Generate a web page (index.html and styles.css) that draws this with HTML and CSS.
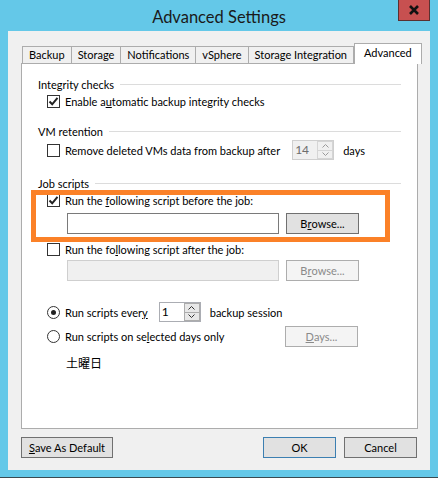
FILE: index.html
```html
<!DOCTYPE html>
<html lang="en">
<head>
  <meta charset="UTF-8" />
  <title>Advanced Settings</title>
  <link rel="stylesheet" href="styles.css">
</head>
<body>

  <div class="window">
    <div class="titlebar">
      <span class="title">Advanced Settings</span>
      <div class="close-btn">
        <svg width="12" height="10" viewBox="0 0 12 10">
          <path d="M2 1 L10 9 M10 1 L2 9" stroke="#111" stroke-width="2.6" />
        </svg>
      </div>
    </div>

    <div class="client">
      <div class="tabs">
        <div class="tab">Backup</div>
        <div class="tab">Storage</div>
        <div class="tab">Notifications</div>
        <div class="tab">vSphere</div>
        <div class="tab">Storage Integration</div>
        <div class="tab active">Advanced</div>
      </div>

      <div class="panel">
        <div class="group-head head-first"><span>Integrity checks</span><div class="rule"></div></div>
        <div class="row row-check1">
          <span class="check on"><svg width="11" height="11" viewBox="0 0 11 11"><path d="M1.5 5.5 L4.2 8.3 L9.5 1.8" fill="none" stroke="#222" stroke-width="2" /></svg></span>
          <span class="label">Enable a<u>u</u>tomatic backup integrity checks</span>
        </div>

        <div class="group-head head-vm"><span>VM retention</span><div class="rule"></div></div>
        <div class="row row-vm">
          <span class="check"></span>
          <span class="label">Remove deleted VMs data from backup after</span>
          <div class="spin spin-off spin-days">
            <span class="spin-val">14</span>
            <div class="spin-btns">
              <span class="arrow"><svg width="7" height="4" viewBox="0 0 7 4"><path d="M0.5 3.5 L3.5 0.5 L6.5 3.5" fill="none" stroke="#9a9a9a" /></svg></span>
              <span class="arrow"><svg width="7" height="4" viewBox="0 0 7 4"><path d="M0.5 0.5 L3.5 3.5 L6.5 0.5" fill="none" stroke="#9a9a9a" /></svg></span>
            </div>
          </div>
          <span class="label days">days</span>
        </div>

        <div class="group-head head-job"><span>Job scripts</span><div class="rule"></div></div>
        <div class="row row-before">
          <span class="check on"><svg width="11" height="11" viewBox="0 0 11 11"><path d="M1.5 5.5 L4.2 8.3 L9.5 1.8" fill="none" stroke="#222" stroke-width="2" /></svg></span>
          <span class="label">Run the <u>f</u>ollowing script before the job:</span>
        </div>
        <div class="row row-path1">
          <div class="textbox"></div>
          <div class="button">B<u>r</u>owse...</div>
        </div>
        <div class="row row-after">
          <span class="check"></span>
          <span class="label">Run the fo<u>l</u>lowing script after the job:</span>
        </div>
        <div class="row row-path2">
          <div class="textbox disabled"></div>
          <div class="button disabled">B<u>r</u>owse...</div>
        </div>

        <div class="row row-every">
          <span class="radio on"></span>
          <span class="label">Run scripts ever<u>y</u></span>
          <div class="spin spin-every">
            <span class="spin-val">1</span>
            <div class="spin-btns">
              <span class="arrow"><svg width="7" height="4" viewBox="0 0 7 4"><path d="M0.5 3.5 L3.5 0.5 L6.5 3.5" fill="none" stroke="#333" /></svg></span>
              <span class="arrow"><svg width="7" height="4" viewBox="0 0 7 4"><path d="M0.5 0.5 L3.5 3.5 L6.5 0.5" fill="none" stroke="#333" /></svg></span>
            </div>
          </div>
          <span class="label">backup session</span>
        </div>
        <div class="row row-days">
          <span class="radio"></span>
          <span class="label">Run scripts on se<u>l</u>ected days only</span>
          <div class="button disabled days-btn"><u>D</u>ays...</div>
        </div>
        <div class="row row-jp">
          <span class="label jp">土曜日</span>
        </div>

        <div class="highlight"></div>
      </div>

      <div class="footer">
        <div class="button footer-btn save-btn"><u>S</u>ave As Default</div>
        <div class="spacer"></div>
        <div class="button footer-btn default">OK</div>
        <div class="button footer-btn">Cancel</div>
      </div>
    </div>
  </div>

</body>
</html>
```

FILE: styles.css
```css
body {
  margin: 0;
  padding: 0;
  font-family: Lato, "Noto Sans CJK JP", sans-serif;
  font-size: 11px;
  color: #000;
}

.window {
  width: 438px;
  height: 478px;
  box-sizing: border-box;
  background: #64c8e8;
  border-bottom: 1px solid #3a4a50;
  display: flex;
  flex-direction: column;
}

.titlebar {
  position: relative;
  height: 31px;
  display: flex;
  align-items: center;
  justify-content: center;
}

.title {
  font-size: 16.5px;
  color: #1a1a1a;
  margin-top: 2px;
}

.close-btn {
  position: absolute;
  top: 0;
  left: 398px;
  width: 32px;
  height: 21px;
  box-sizing: border-box;
  background: #c75050;
  border: 1px solid #5a3030;
  border-top: none;
  display: flex;
  align-items: center;
  justify-content: center;
}

.client {
  margin: 0 8px;
  height: 439px;
  background: #f0f0f0;
  padding: 12px 12px 0 13px;
  box-sizing: border-box;
}

.tabs {
  display: flex;
  align-items: flex-end;
  height: 20px;
  padding-left: 1px;
}

.tab {
  height: 17px;
  box-sizing: border-box;
  border: 1px solid #acacac;
  border-bottom: none;
  margin-right: -1px;
  padding: 0 6px;
  line-height: 16px;
  background: #f0f0f0;
  white-space: nowrap;
}

.tab.active {
  height: 21px;
  background: #fff;
  position: relative;
  margin-bottom: -1px;
  margin-left: 1px;
  padding: 0 9px;
  line-height: 17px;
  z-index: 2;
}

.panel {
  position: relative;
  width: 397px;
  height: 366px;
  box-sizing: border-box;
  border: 1px solid #acacac;
  background: #fff;
  padding-left: 16px;
}

.group-head {
  display: flex;
  align-items: center;
  height: 16px;
  margin-right: 16px;
}

.group-head span {
  white-space: nowrap;
  margin-right: 6px;
}

.rule {
  flex: 1;
  height: 1px;
  background: #dcdcdc;
}

.head-first { margin-top: 12px; }
.head-vm { margin-top: 14px; }
.head-job { margin-top: 15px; }

.row {
  display: flex;
  align-items: center;
  padding-left: 9px;
}

.row-check1 { height: 16px; margin-top: 1px; }
.row-vm { height: 20px; margin-top: 1px; }
.row-before { height: 16px; margin-top: 1px; }
.row-path1 { height: 21px; margin-top: 5px; padding-left: 29px; }
.row-after { height: 16px; margin-top: 7px; }
.row-path2 { height: 21px; margin-top: 3px; padding-left: 29px; }
.row-every { height: 20px; margin-top: 21px; }
.row-days { height: 21px; margin-top: 4px; }
.row-jp { height: 16px; margin-top: 7px; padding-left: 28px; }

.check {
  width: 13px;
  height: 13px;
  box-sizing: border-box;
  border: 1px solid #333;
  background: #fff;
  margin-right: 5px;
  display: flex;
  align-items: center;
  justify-content: center;
}

.radio {
  width: 13px;
  height: 13px;
  box-sizing: border-box;
  border: 1px solid #333;
  border-radius: 50%;
  background: #fff;
  margin-right: 5px;
  display: flex;
  align-items: center;
  justify-content: center;
}

.radio.on::after {
  content: "";
  width: 5px;
  height: 5px;
  border-radius: 50%;
  background: #222;
}

.label {
  white-space: nowrap;
}

.label.days {
  margin-left: 9px;
}

.jp {
  font-size: 12px;
}

.spin {
  display: flex;
  height: 20px;
  width: 42px;
  box-sizing: border-box;
  border: 1px solid #abadb3;
  background: #fff;
}

.spin-days {
  margin-left: auto;
}

.row-vm .days {
  margin-right: 52px;
}

.spin-every {
  margin-left: 11px;
  margin-right: 9px;
}

.spin-off {
  background: #f0f0f0;
  border-color: #cfcfcf;
  color: #6d6d6d;
}

.spin-val {
  flex: 1;
  padding-left: 2px;
  line-height: 18px;
  font-size: 12px;
}

.spin-btns {
  width: 16px;
  display: flex;
  flex-direction: column;
}

.arrow {
  flex: 1;
  box-sizing: border-box;
  border: 1px solid #acacac;
  background: #e8e8e8;
  display: flex;
  align-items: center;
  justify-content: center;
}

.arrow + .arrow {
  border-top: none;
}

.spin-off .arrow {
  background: #f0f0f0;
  border-color: #d5d5d5;
}

.textbox {
  width: 212px;
  height: 21px;
  box-sizing: border-box;
  border: 1px solid #7a7a7a;
  background: #fff;
}

.textbox.disabled {
  border-color: #cfcfcf;
  background: #f0f0f0;
}

.button {
  height: 21px;
  box-sizing: border-box;
  border: 1px solid #707070;
  background: #e1e1e1;
  display: flex;
  align-items: center;
  justify-content: center;
  white-space: nowrap;
}

.row-path1 .button,
.row-path2 .button {
  width: 73px;
  margin-left: 7px;
}

.button.disabled {
  border-color: #adadad;
  background: #f4f4f4;
  color: #8a8a8a;
}

.days-btn {
  width: 73px;
  margin-left: auto;
  margin-right: 59px;
}

.highlight {
  position: absolute;
  left: 9px;
  top: 126px;
  width: 359px;
  height: 52px;
  box-sizing: border-box;
  border: 5px solid #fb8128;
}

.footer {
  display: flex;
  align-items: center;
  margin-top: 8px;
  height: 21px;
}

.footer-btn {
  width: 73px;
}

.save-btn {
  width: 92px;
}

.footer-btn.default {
  border-color: #3c7fb1;
  margin-right: 8px;
}

.spacer {
  flex: 1;
}

.footer .footer-btn:last-child {
  margin-right: 1px;
}
```
